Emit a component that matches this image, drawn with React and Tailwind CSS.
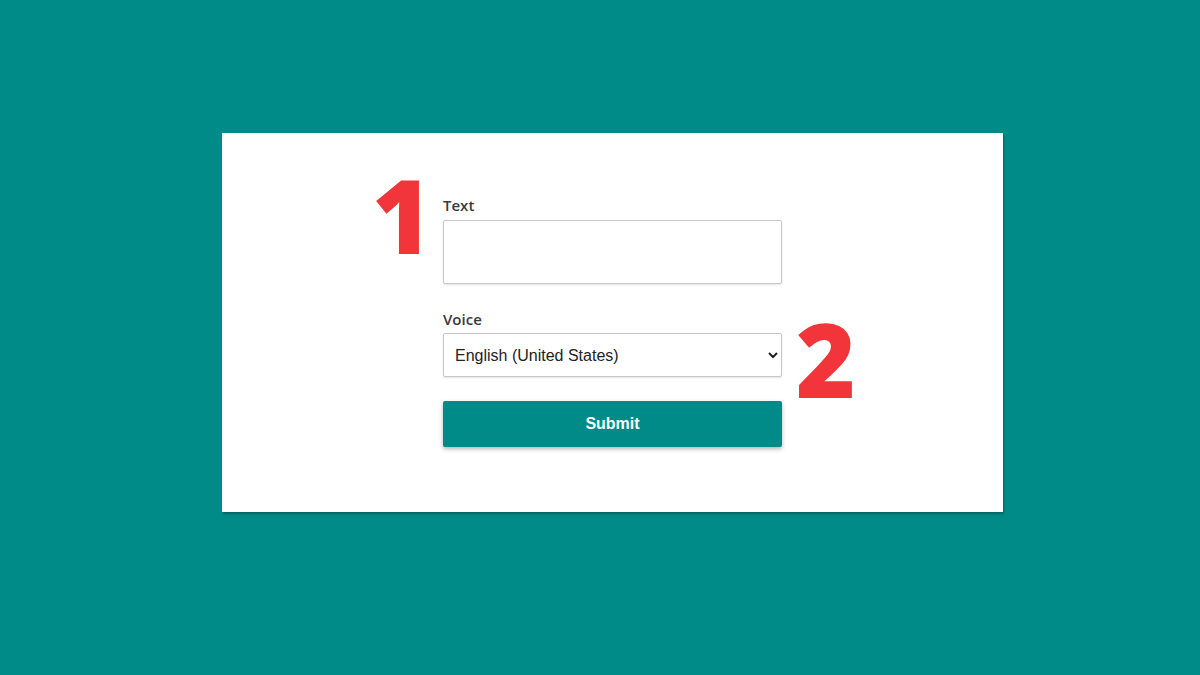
import { useState } from 'react';

const labelCls = "block text-[15px] leading-5 font-semibold text-[#3a3a3a] font-['Open_Sans',sans-serif]";
const stepCls = "absolute text-[102px] leading-none font-extrabold text-[#f2353a] font-['Open_Sans',sans-serif] select-none";

export default function App() {
  const [text, setText] = useState('');
  const [voice, setVoice] = useState('en-US');

  return (
    <div className="min-h-[675px] w-full bg-[#008b88] pt-[133px] pl-[222px]">
      <div className="relative w-[781px] h-[379px] bg-white shadow-[1px_2px_2px_rgba(0,0,0,0.25)]">
        <form
          className="relative ml-[221px] w-[339px] pt-[62px]"
          onSubmit={(e) => e.preventDefault()}
        >
          {/* step markers */}
          <span className={`${stepCls} -left-[71px] top-[31px]`}>1</span>
          <span className={`${stepCls} left-[353px] top-[175px]`}>2</span>

          <label className={`${labelCls} mb-[5px]`}>Text</label>
          <textarea
            value={text}
            onChange={(e) => setText(e.target.value)}
            className="block w-full h-[64px] resize-none rounded-[2px] border border-[#c8c8c8] shadow-[0_1px_2px_rgba(0,0,0,0.12)] px-3 py-2 text-base outline-none font-['Liberation_Sans',Arial,sans-serif]"
          />

          <label className={`${labelCls} mt-[25px] mb-[4px]`}>Voice</label>
          <select
            value={voice}
            onChange={(e) => setVoice(e.target.value)}
            className="block w-full h-[44px] rounded-[2px] border border-[#c8c8c8] bg-white shadow-[0_1px_2px_rgba(0,0,0,0.12)] pl-[7px] pr-2 text-base text-[#222] outline-none font-['Liberation_Sans',Arial,sans-serif]"
          >
            <option value="en-US">English (United States)</option>
            <option value="en-GB">English (United Kingdom)</option>
          </select>

          <button
            type="submit"
            className="mt-[24px] block w-full h-[46px] rounded-[2px] bg-[#008b88] text-white text-base font-bold shadow-[0_2px_4px_rgba(0,0,0,0.3)] font-['Liberation_Sans',Arial,sans-serif]"
          >
            Submit
          </button>
        </form>
      </div>
    </div>
  );
}
